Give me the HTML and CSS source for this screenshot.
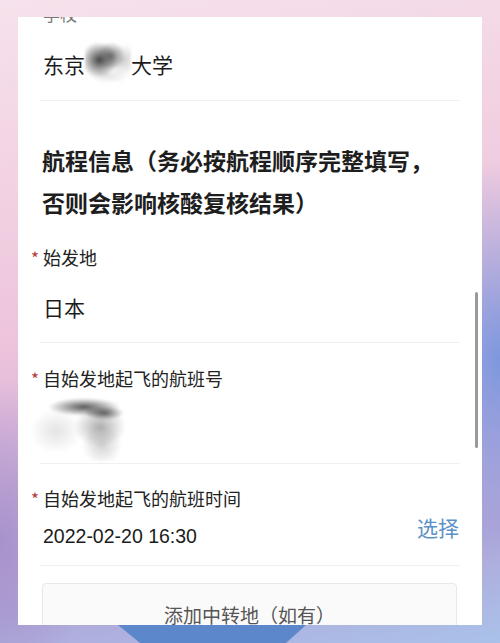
FILE: index.html
```html
<!DOCTYPE html>
<html lang="zh">
<head>
<meta charset="utf-8">
<link rel="stylesheet" href="styles.css">
</head>
<body>
<div class="screen">
  <div class="card">
    <div class="school">
      <div class="school-label">学校</div>
      <div class="school-value">东京<span class="smudge"></span>大学</div>
    </div>
    <h2 class="heading">航程信息（务必按航程顺序完整填写，<br>否则会影响核酸复核结果）</h2>
    <div class="field f1">
      <div class="label"><span class="star">*</span>始发地</div>
      <div class="value v1">日本</div>
    </div>
    <div class="field f2">
      <div class="label"><span class="star">*</span>自始发地起飞的航班号</div>
      <div class="value v2"><div class="smudge2"></div></div>
    </div>
    <div class="field f3">
      <div class="label"><span class="star">*</span>自始发地起飞的航班时间</div>
      <div class="value v3"><span class="date">2022-02-20 16:30</span><span class="pick">选择</span></div>
    </div>
    <div class="add-btn">添加中转地（如有）</div>
    <div class="scrollbar"></div>
  </div>
  <div class="bottom-deco">
    <svg width="500" height="18" viewBox="0 0 500 18"><polygon points="118,0 306,0 286,18 140,18" fill="#5d87cb"/></svg>
  </div>
</div>
</body>
</html>
```
FILE: styles.css
```css
html, body {
  margin: 0;
  padding: 0;
}
body {
  width: 500px;
  height: 643px;
  overflow: hidden;
  font-family: "Noto Sans CJK SC", "Noto Sans", sans-serif;
  background:
    radial-gradient(ellipse 110px 200px at 500px 360px, rgba(115,148,222,0.9), rgba(115,148,222,0) 100%),
    radial-gradient(ellipse 90px 160px at 0px 540px, rgba(160,140,200,0.8), rgba(160,140,200,0) 100%),
    linear-gradient(170deg, #f6e2ec 0%, #f2d2e3 25%, #edc3db 48%, #d2b2da 66%, #b1a6d8 84%, #a9c2e9 100%);
}
.screen {
  display: flex;
  flex-direction: column;
  padding-top: 17px;
}
.card {
  position: relative;
  margin: 0 18px;
  height: 608px;
  background: #fff;
  overflow: hidden;
}
.school {
  margin: -15px 22px 0;
  border-bottom: 1px solid #f0f0f0;
  padding-left: 3px;
}
.school-label {
  font-size: 17px;
  line-height: 24px;
  color: #777;
}
.school-value {
  display: flex;
  align-items: center;
  font-size: 21px;
  line-height: 24px;
  height: 24px;
  color: #1c1c1c;
  padding: 26px 0 24px;
}
.smudge {
  display: inline-block;
  width: 46px;
  height: 40px;
  margin: -10px 0 -6px;
  background:
    radial-gradient(ellipse 18px 18px at 14px 18px, rgba(60,60,60,0.95), rgba(80,80,80,0) 100%),
    radial-gradient(ellipse 14px 14px at 26px 14px, rgba(100,100,100,0.85), rgba(120,120,120,0) 100%),
    radial-gradient(ellipse 16px 16px at 38px 18px, rgba(190,190,190,0.75), rgba(200,200,200,0) 100%),
    radial-gradient(ellipse 20px 8px at 24px 34px, rgba(210,210,210,0.6), rgba(210,210,210,0) 100%);
  filter: blur(1.2px);
}
.heading {
  margin: 38px 0 0;
  padding-left: 24px;
  font-size: 23px;
  line-height: 42px;
  font-weight: 700;
  color: #1e1e1e;
}
.field {
  margin: 0 22px;
  border-bottom: 1px solid #f0f0f0;
}
.f1 { padding-top: 22px; }
.f2 { padding-top: 23px; }
.f3 { padding-top: 22px; }
.label {
  display: flex;
  margin-left: -9px;
  font-size: 18px;
  line-height: 24px;
  color: #222;
}
.star {
  width: 12px;
  font-size: 17px;
  color: #b53a3a;
  line-height: 24px;
  padding-top: 1px;
  box-sizing: border-box;
}
.value {
  padding-left: 3px;
  color: #1c1c1c;
}
.v1 {
  font-size: 21px;
  line-height: 24px;
  padding-top: 25px;
  padding-bottom: 23px;
}
.v2 {
  height: 72px;
  position: relative;
}
.smudge2 {
  position: absolute;
  left: -10px;
  top: 6px;
  width: 104px;
  height: 64px;
  background:
    radial-gradient(ellipse 36px 9px at 54px 10px, rgba(70,70,70,0.9), rgba(80,80,80,0) 100%),
    radial-gradient(ellipse 20px 7px at 74px 16px, rgba(60,60,60,0.8), rgba(60,60,60,0) 100%),
    radial-gradient(ellipse 26px 20px at 70px 30px, rgba(140,140,140,0.7), rgba(150,150,150,0) 100%),
    radial-gradient(ellipse 20px 20px at 72px 48px, rgba(180,180,180,0.6), rgba(190,190,190,0) 100%),
    radial-gradient(ellipse 26px 22px at 26px 34px, rgba(205,205,205,0.55), rgba(215,215,215,0) 100%);
  filter: blur(1.2px);
}
.v3 {
  display: flex;
  justify-content: space-between;
  align-items: flex-start;
  font-size: 20px;
  line-height: 24px;
  padding-top: 13px;
  padding-bottom: 17px;
}
.date {
  font-family: "Liberation Sans", "Noto Sans", sans-serif;
  font-size: 19.5px;
}
.pick {
  font-size: 21px;
  line-height: 24px;
  margin-top: -9px;
  margin-right: 1px;
  color: #5a91c6;
}
.add-btn {
  margin: 17px 0 0 24px;
  width: 413px;
  height: 60px;
  border: 1px solid #e8e8e8;
  border-radius: 4px;
  background: #fafafa;
  display: flex;
  align-items: center;
  justify-content: center;
  font-size: 19px;
  color: #555;
}
.scrollbar {
  position: absolute;
  left: 457px;
  top: 275px;
  width: 3px;
  height: 156px;
  border-radius: 2px;
  background: #9a9a9a;
}
.bottom-deco {
  height: 18px;
  line-height: 0;
}
```
